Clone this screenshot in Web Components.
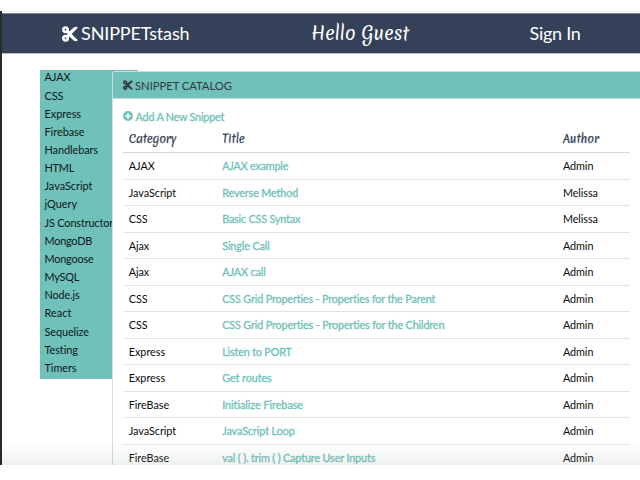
<!DOCTYPE html>
<html lang="en">
<head>
<meta charset="utf-8">
<title>SNIPPETstash</title>
<style>
html, body { margin: 0; height: 480px; overflow: hidden; background: #fff; }
body { font-family: Lato, "Liberation Sans", sans-serif; }
</style>
</head>
<body>
<stash-app></stash-app>
<script>
const define = (name, html, setup) => customElements.define(name, class extends HTMLElement {
  constructor() {
    super();
    this.attachShadow({ mode: 'open' }).innerHTML = html;
  }
  connectedCallback() { if (setup) setup(this, this.shadowRoot); }
});

/* One line of text, tracked to the width in its "w" attribute. */
define('fit-text', `<style>:host{display:inline-block;white-space:pre}span{display:inline-block}</style><span><slot></slot></span>`,
  (el, root) => {
    const w = parseFloat(el.getAttribute('w'));
    if (!w) return;
    const span = root.querySelector('span');
    const n = el.textContent.length;
    span.style.letterSpacing = ((w - span.getBoundingClientRect().width) / n) + 'px';
  });

define('icon-scissors', `<style>:host{display:inline-block;width:16px;height:16px}svg{display:block;width:100%;height:100%}</style>
<svg viewBox="0 0 16 16" fill="none" stroke="currentColor">
<circle cx="3.5" cy="3.7" r="2.2" stroke-width="2.6"/><circle cx="3.5" cy="12.3" r="2.2" stroke-width="2.6"/>
<path d="M4.8 5.2 8 8 4.8 10.8" stroke-width="3"/>
<path d="M6.4 6.2 12 1.2Q14.2.2 15.9 1.8L9.6 8 15.9 14.2Q14.2 15.8 12 14.8L6.4 9.8 8.2 8Z" fill="currentColor" stroke="none"/></svg>`);

define('icon-plus', `<style>:host{display:block;width:10px;height:10px}svg{display:block;width:100%;height:100%}</style>
<svg viewBox="0 0 10 10"><circle cx="5" cy="5" r="5" fill="currentColor"/><path d="M5 2.2V7.8M2.2 5H7.8" stroke="#fff" stroke-width="1.7"/></svg>`);

define('stash-nav', `<style>
:host{display:grid;grid-template-columns:60px 249px 218.6px 1fr;height:41px;box-sizing:border-box;align-items:center;background:#344158;color:#fff;border-top:1px solid #7d8a94;border-bottom:1px solid #b9bfc8;font-size:18px;line-height:39px}
.brand{grid-column:2;display:flex;align-items:center}
icon-scissors{margin-right:3px;width:16px;height:16px}
.hello{font:400 18px/39px "Merienda One",Merienda,Lato,cursive}
</style><div class="brand"><icon-scissors></icon-scissors><fit-text w="108.5">SNIPPETstash</fit-text></div>
<fit-text class="hello" w="98">Hello Guest</fit-text><fit-text w="51">Sign In</fit-text>`);

const cats = [['AJAX',26],['CSS',19],['Express',36.5],['Firebase',40],['Handlebars',53.5],['HTML',29.5],['JavaScript',48],['jQuery',32.5],['JS Constructor',68.5],['MongoDB',47.5],['Mongoose',49],['MySQL',34.5],['Node.js',35],['React',27],['Sequelize',44.5],['Testing',33.5],['Timers',32]];
define('category-list', `<style>
:host{display:block;box-sizing:border-box;width:98px;height:308.5px;background:#70c1b9;padding:.4px 0 0 4.5px;color:#0c1718;font-size:10.9px}
div{height:18.16px;line-height:14px;white-space:nowrap}</style>` +
cats.map(([t, w]) => `<div><fit-text w="${w}">${t}</fit-text></div>`).join(''));

define('snippet-row', `<style>
:host{display:grid;grid-template-columns:93.5px 340.7px 1fr;height:26.55px;box-sizing:border-box;padding-left:5.7px;line-height:25.5px;border-top:1px solid #e2e3e4;color:#0b0b0b;font-size:10.8px}
.title{color:#70c1b9;-webkit-text-stroke:.3px #70c1b9}
::slotted(*){display:block}
</style><slot name="category"></slot><span class="title"><slot name="title"></slot></span><slot name="author"></slot>`);

const rows = [
['AJAX',26,'AJAX example',66,'Admin'],['JavaScript',47.5,'Reverse Method',76,'Melissa'],['CSS',19,'Basic CSS Syntax',78,'Melissa'],
['Ajax',20.5,'Single Call',47.5,'Admin'],['Ajax',20.5,'AJAX call',43.5,'Admin'],
['CSS',19,'CSS Grid Properties - Properties for the Parent',213.5,'Admin'],
['CSS',19,'CSS Grid Properties - Properties for the Children',222.5,'Admin'],
['Express',36.5,'Listen to PORT',69.5,'Admin'],['Express',36.5,'Get routes',49.5,'Admin'],
['FireBase',40.5,'Initialize Firebase',81,'Admin'],['JavaScript',47.5,'JavaScript Loop',72.5,'Admin'],
['FireBase',40.5,'val ( ). trim ( ) Capture User Inputs',153,'Admin']];

define('snippet-table', `<style>
:host{display:block;width:507px}
.head{display:grid;grid-template-columns:93.5px 340.7px 1fr;height:28px;line-height:31px;padding-left:5.7px;box-sizing:border-box;color:#344158;font-family:"Merienda One",Merienda,Lato,cursive;font-weight:400;font-size:11px;-webkit-text-stroke:.25px #344158}
snippet-row:first-child{border-top-color:#d4d6d8}
</style><div class="head"><fit-text w="47.5">Category</fit-text><fit-text w="22.5">Title</fit-text><fit-text w="36">Author</fit-text></div><div class="rows">` +
rows.map(([c, cw, t, tw, a]) => `<snippet-row><fit-text slot="category" w="${cw}">${c}</fit-text><fit-text slot="title" w="${tw}">${t}</fit-text><fit-text slot="author" w="${a === 'Admin' ? 30.5 : 35}">${a}</fit-text></snippet-row>`).join('') + `</div>`);

define('snippet-catalog', `<style>
:host{display:block;box-sizing:border-box;width:540px;height:420px;border:1px solid #d2dadb;border-radius:3px 0 0 0;background:#fff;overflow:hidden}
header{display:flex;align-items:center;height:27px;box-sizing:border-box;padding:0 0 0 10px;background:#70c1b9;border-bottom:1px solid #c9dedc;color:#303b3f;font-size:11.3px}
header icon-scissors{width:10px;height:10px;margin-right:2px}
.body{padding:9px 0 0 10px}
.add{display:flex;align-items:center;height:16px;color:#70c1b9;font-size:10.8px;-webkit-text-stroke:.3px #70c1b9}
.add icon-plus{margin-right:2.6px}
</style><header><icon-scissors></icon-scissors><fit-text w="97">SNIPPET CATALOG</fit-text></header>
<div class="body"><div class="add"><icon-plus></icon-plus><fit-text w="88.5">Add A New Snippet</fit-text></div><snippet-table></snippet-table></div>`);

define('stash-app', `<style>
:host{display:block;box-sizing:border-box;padding-top:11px;width:640px;height:480px;background:#fff}
.window{position:relative;box-sizing:border-box;height:454px;border-left:2px solid #292a2c;overflow:hidden}
.window::before{content:"";display:block;height:2px;background:#f4f7f6}
main{display:grid;grid-template-columns:72px 1fr;padding:16px 0 0 38px}
snippet-catalog{margin-top:1px;position:relative}
.shade{position:absolute;left:0;right:0;bottom:0;height:22px;background:linear-gradient(rgba(150,160,160,0),rgba(150,160,160,.16))}
</style><div class="window"><stash-nav></stash-nav><main><category-list></category-list><snippet-catalog></snippet-catalog></main><div class="shade"></div></div>`);
</script>
</body>
</html>
